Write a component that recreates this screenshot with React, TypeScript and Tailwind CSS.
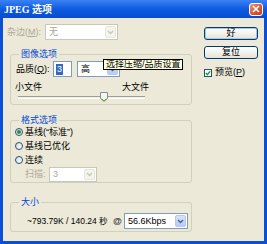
import React from "react";

function Chevron({ color }: { color: string }) {
  return (
    <svg width="7" height="5" viewBox="0 0 7 5">
      <path d="M1 1 L3.5 3.5 L6 1" stroke={color} strokeWidth="1.4" fill="none" />
    </svg>
  );
}

function Combo({
  value,
  disabled,
  className,
}: {
  value: string;
  disabled?: boolean;
  className: string;
}) {
  return (
    <div
      className={
        "flex items-stretch bg-white border " +
        (disabled ? "border-[#C9C7BA] " : "border-[#7F9DB9] ") +
        className
      }
    >
      <div
        className={
          "flex-1 flex items-center pl-[3px] " +
          (disabled ? "text-[#ACA899]" : "text-black")
        }
      >
        {value}
      </div>
      <div
        className={
          "w-[11px] m-[1px] rounded-[2px] flex items-center justify-center border " +
          (disabled
            ? "bg-[#F5F4EA] border-[#E8E6DA]"
            : "bg-gradient-to-b from-[#D6E3FE] to-[#B5CAF7] border-[#B4C8F4]")
        }
      >
        <Chevron color={disabled ? "#C9C7BA" : "#4D6185"} />
      </div>
    </div>
  );
}

function Group({
  title,
  className,
  children,
}: {
  title: string;
  className: string;
  children?: React.ReactNode;
}) {
  return (
    <div
      className={
        "relative ml-[7px] w-[182px] border border-[#D0D0BF] rounded-[3px] " +
        className
      }
    >
      <span className="absolute -top-[7px] left-[8px] px-[2px] bg-[#ECE9D8] text-[#0046D5] leading-[12px]">
        {title}
      </span>
      {children}
    </div>
  );
}

function Radio({ checked, label }: { checked?: boolean; label: string }) {
  return (
    <div className="h-[14px] flex items-center">
      <div className="w-[8px] h-[8px] rounded-full border border-[#1C5180] bg-gradient-to-br from-[#DCDBD3] to-white flex items-center justify-center">
        {checked && <div className="w-[4px] h-[4px] rounded-full bg-[#2F8A2F]" />}
      </div>
      <span className="ml-[2px]">{label}</span>
    </div>
  );
}

export default function App() {
  return (
    <div className="w-[267px] h-[244px] flex flex-col bg-[#0A4FD6] font-['Liberation_Sans','Noto_Sans_CJK_SC',sans-serif] text-[9px] leading-[11px] text-black overflow-hidden">
      {/* Title bar */}
      <div className="h-[18px] shrink-0 flex items-center justify-between pl-[4px] pr-[4px] bg-gradient-to-b from-[#3C82F4] via-[#0C5BE0] to-[#0A4CCF]">
        <span className="text-white font-bold text-[10px] font-['Liberation_Serif','Noto_Sans_CJK_SC',serif]">
          JPEG 选项
        </span>
        <div className="w-[14px] h-[13px] rounded-[3px] border border-white bg-gradient-to-br from-[#EA9A7D] via-[#DB5A34] to-[#C4411D] flex items-center justify-center">
          <svg width="8" height="8" viewBox="0 0 8 8">
            <path d="M1 1 L7 7 M7 1 L1 7" stroke="white" strokeWidth="1.6" />
          </svg>
        </div>
      </div>

      {/* Body */}
      <div className="flex-1 mx-[3px] mb-[3px] bg-[#ECE9D8] flex">
        {/* Left column */}
        <div className="w-[190px] flex flex-col">
          {/* 杂边 */}
          <div className="mt-[6px] ml-[4px] h-[16px] flex items-center">
            <span className="w-[38px] text-[#ACA899]">
              杂边(<span className="underline">M</span>):
            </span>
            <Combo value="无" disabled className="w-[73px] h-[16px]" />
          </div>

          {/* 图像选项 */}
          <Group title="图像选项" className="mt-[14px] h-[51px]">
            <div className="mt-[6px] pl-[5px] h-[16px] flex items-center">
              <span className="w-[37px]">
                品质(<span className="underline">Q</span>):
              </span>
              <div className="w-[19px] h-[16px] border border-[#7F9DB9] bg-white flex items-center pl-[2px]">
                <span className="bg-[#316AC5] text-white px-[1px]">3</span>
              </div>
              <Combo value="高" className="ml-[5px] w-[43px] h-[16px]" />
            </div>
            <div className="absolute left-[92px] top-[4px] w-[80px] h-[11px] bg-[#FFFFE1] border border-black flex items-center pl-[2px] whitespace-nowrap">
              选择压缩/品质设置
            </div>
            <div className="mt-[5px] ml-[4px] w-[134px] flex justify-between h-[10px] items-center">
              <span>小文件</span>
              <span>大文件</span>
            </div>
            <div className="relative h-[10px] ml-[7px] w-[127px]">
              <div className="absolute left-0 right-0 top-[4px] h-[3px] border-t border-[#9D9C95] border-b border-b-white bg-[#F0EFE8]" />
              <svg
                className="absolute left-[82px] top-[0px]"
                width="8"
                height="10"
                viewBox="0 0 8 10"
              >
                <path
                  d="M0.5 0.5 H7.5 V6.5 L4 9.5 L0.5 6.5 Z"
                  fill="#F7F7F4"
                  stroke="#8A8F86"
                  strokeWidth="1"
                />
                <path d="M1.5 6.8 L4 8.8 L6.5 6.8" stroke="#3DBA3D" strokeWidth="1" fill="none" />
              </svg>
            </div>
          </Group>

          {/* 格式选项 */}
          <Group title="格式选项" className="mt-[15px] h-[63px]">
            <div className="pt-[4px] pl-[4px] flex flex-col">
              <Radio checked label="基线(“标准”)" />
              <Radio label="基线已优化" />
              <Radio label="连续" />
            </div>
            <div className="pl-[14px] h-[15px] flex items-center">
              <span className="w-[24px] text-[#ACA899]">扫描:</span>
              <Combo value="3" disabled className="w-[48px] h-[15px]" />
            </div>
          </Group>

          {/* 大小 */}
          <Group title="大小" className="mt-[19px] h-[30px]">
            <div className="pt-[10px] pl-[16px] h-[26px] flex items-center">
              <span className="w-[86px] whitespace-nowrap text-[8.5px]">~793.79K / 140.24 秒</span>
              <span className="w-[10px] font-bold text-[#333]">@</span>
              <Combo value="56.6Kbps" className="ml-[1px] w-[64px] h-[16px]" />
            </div>
          </Group>
        </div>

        {/* Right column */}
        <div className="ml-[11px] mt-[9px] w-[54px] flex flex-col">
          <div className="h-[13px] rounded-[3px] border border-[#003C74] bg-gradient-to-b from-white to-[#E5E3D8] shadow-[inset_0_0_0_1px_#A9C6F3] flex items-center justify-center">
            好
          </div>
          <div className="mt-[6px] h-[13px] rounded-[3px] border border-[#003C74] bg-gradient-to-b from-white to-[#E5E3D8] flex items-center justify-center">
            复位
          </div>
          <div className="mt-[9px] flex items-center h-[9px]">
            <div className="w-[8px] h-[8px] border border-[#1C5180] bg-white flex items-center justify-center">
              <svg width="6" height="6" viewBox="0 0 6 6">
                <path d="M0.8 3 L2.4 4.6 L5.2 1.2" stroke="#21A121" strokeWidth="1.4" fill="none" />
              </svg>
            </div>
            <span className="ml-[3px]">
              预览(<span className="underline">P</span>)
            </span>
          </div>
        </div>
      </div>
    </div>
  );
}
